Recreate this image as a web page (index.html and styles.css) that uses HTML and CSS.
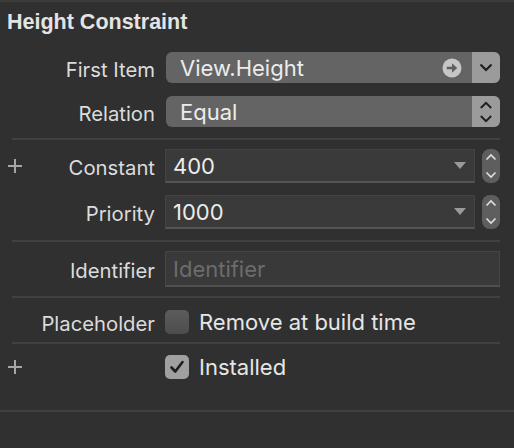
FILE: index.html
```html
<!DOCTYPE html>
<html>
<head>
<meta charset="utf-8">
<link rel="stylesheet" href="styles.css">
</head>
<body>
<div class="panel">
  <div class="title">Height Constraint</div>

  <div class="row row-first">
    <div class="label"><span class="label-text">First Item</span></div>
    <div class="popup">
      <span class="popup-text">View.Height</span>
      <svg class="goto" width="20" height="20" viewBox="0 0 20 20"><circle cx="10" cy="10" r="9.5" fill="#c6c6c6"/><path d="M4.8 10H12" stroke="#5f5f5f" stroke-width="2.6"/><path d="M10 5.2L15.2 10L10 14.8Z" fill="#5f5f5f"/></svg>
      <span class="popup-arrow"><svg width="14" height="9" viewBox="0 0 14 9"><path d="M1.5 1.5L7 7L12.5 1.5" fill="none" stroke="#1f1f1f" stroke-width="2.2"/></svg></span>
    </div>
  </div>

  <div class="row row-rel">
    <div class="label"><span class="label-text">Relation</span></div>
    <div class="popup">
      <span class="popup-text">Equal</span>
      <span class="popup-arrow"><svg width="14" height="24" viewBox="0 0 14 24"><path d="M1.8 8L7 2.8L12.2 8" fill="none" stroke="#1f1f1f" stroke-width="2"/><path d="M1.8 16L7 21.2L12.2 16" fill="none" stroke="#1f1f1f" stroke-width="2"/></svg></span>
    </div>
  </div>

  <div class="sep sep1"></div>

  <div class="row row-const">
    <div class="label"><svg class="plus" width="14" height="14" viewBox="0 0 14 14"><path d="M7 0V14M0 7H14" stroke="#a6a6a6" stroke-width="2"/></svg><span class="label-text">Constant</span></div>
    <div class="ctrl">
      <div class="combo"><span class="combo-text">400</span><span class="tri"></span></div>
      <svg class="stepper" width="18" height="34" viewBox="0 0 18 34"><rect x="0" y="0" width="18" height="34" rx="8" fill="#5e5e5e"/><path d="M4.5 10.5L9 6L13.5 10.5" fill="none" stroke="#e0e0e0" stroke-width="1.6"/><path d="M4.5 23.5L9 28L13.5 23.5" fill="none" stroke="#e0e0e0" stroke-width="1.6"/></svg>
    </div>
  </div>

  <div class="row row-prio">
    <div class="label"><span class="label-text">Priority</span></div>
    <div class="ctrl">
      <div class="combo"><span class="combo-text">1000</span><span class="tri"></span></div>
      <svg class="stepper" width="18" height="34" viewBox="0 0 18 34"><rect x="0" y="0" width="18" height="34" rx="8" fill="#5e5e5e"/><path d="M4.5 10.5L9 6L13.5 10.5" fill="none" stroke="#e0e0e0" stroke-width="1.6"/><path d="M4.5 23.5L9 28L13.5 23.5" fill="none" stroke="#e0e0e0" stroke-width="1.6"/></svg>
    </div>
  </div>

  <div class="sep sep2"></div>

  <div class="row row-ident">
    <div class="label"><span class="label-text">Identifier</span></div>
    <div class="textfield"><span class="placeholder">Identifier</span></div>
  </div>

  <div class="sep sep3"></div>

  <div class="row row-place">
    <div class="label"><span class="label-text">Placeholder</span></div>
    <div class="check-line">
      <span class="checkbox"></span>
      <span class="check-text">Remove at build time</span>
    </div>
  </div>

  <div class="sep sep4"></div>

  <div class="row row-inst">
    <div class="label"><svg class="plus" width="14" height="14" viewBox="0 0 14 14"><path d="M7 0V14M0 7H14" stroke="#a6a6a6" stroke-width="2"/></svg></div>
    <div class="check-line">
      <span class="checkbox checked"><svg width="24" height="24" viewBox="0 0 24 24"><path d="M6.5 12.5L10.3 16.5L17.5 7" fill="none" stroke="#1e1e1e" stroke-width="2.6" stroke-linecap="round" stroke-linejoin="round"/></svg></span>
      <span class="check-text">Installed</span>
    </div>
  </div>

  <div class="bottom-line"></div>
</div>
</body>
</html>
```

FILE: styles.css
```css
* { box-sizing: border-box; }
html, body {
  margin: 0;
  padding: 0;
  background: #303030;
}
body {
  width: 514px;
  height: 448px;
  overflow: hidden;
  font-family: "Inter", "Liberation Sans", sans-serif;
  color: #dedede;
}
.panel {
  display: flex;
  flex-direction: column;
  border-top: 2px solid #3b3b3b;
}
.title {
  height: 38px;
  padding: 8px 0 0 7px;
  font-family: "Liberation Sans", "Inter", sans-serif;
  font-size: 21.5px;
  font-weight: 700;
  line-height: 24px;
  color: #e4e4e4;
}
.row {
  display: grid;
  grid-template-columns: 155px 1fr;
  column-gap: 10px;
  align-items: center;
  padding-right: 14px;
  font-size: 22px;
}
.label {
  display: flex;
  align-items: center;
  padding-left: 8px;
  height: 100%;
  color: #dcdcdc;
  white-space: nowrap;
  font-size: 20.3px;
}
.label-text { margin-left: auto; padding-top: 3px; }
.plus { display: block; }
.row-first { margin-top: 12px; height: 31px; }
.row-rel { margin-top: 13px; height: 31px; }
.popup {
  margin-left: 1px;
  height: 31px;
  display: flex;
  align-items: center;
  background: #646464;
  border-radius: 6px;
  overflow: hidden;
  color: #ececec;
}
.popup-text { flex: 1; padding-left: 14px; }
.goto { margin-right: 10px; display: block; }
.popup-arrow {
  width: 28px;
  height: 100%;
  background: #9b9b9b;
  display: flex;
  align-items: center;
  justify-content: center;
}
.sep {
  height: 2px;
  margin-left: 12px;
  margin-right: 14px;
  background: #414141;
}
.sep1 { margin-top: 11px; }
.row-const { margin-top: 9px; height: 34px; }
.row-prio { margin-top: 12px; height: 34px; }
.ctrl {
  display: flex;
  align-items: center;
  gap: 7px;
}
.combo {
  flex: 1;
  height: 34px;
  display: flex;
  align-items: center;
  background: #3a3a3a;
  border: 1px solid #434343;
  border-bottom: 2px solid #555555;
  color: #ececec;
}
.combo-text { flex: 1; padding-left: 7px; }
.tri {
  width: 0;
  height: 0;
  border-left: 6px solid transparent;
  border-right: 6px solid transparent;
  border-top: 7px solid #9a9a9a;
  margin-right: 8px;
}
.stepper { display: block; }
.sep2 { margin-top: 11px; }
.row-ident { margin-top: 9px; height: 36px; }
.textfield {
  height: 36px;
  display: flex;
  align-items: center;
  background: #393939;
  border: 1px solid #454545;
  border-bottom: 2px solid #505050;
}
.placeholder { padding-left: 7px; color: #6c6c6c; }
.sep3 { margin-top: 9px; }
.row-place { margin-top: 10px; height: 24px; }
.check-line {
  display: flex;
  align-items: center;
  gap: 10px;
  color: #e6e6e6;
}
.checkbox {
  width: 24px;
  height: 24px;
  border-radius: 5px;
  background: linear-gradient(#5c5c5c, #4d4d4d);
  display: flex;
}
.checkbox.checked { background: #a0a0a0; }
.sep4 { margin-top: 10px; }
.row-inst { margin-top: 10px; height: 24px; }
.bottom-line {
  margin-top: 32px;
  height: 2px;
  background: #404040;
}
```
